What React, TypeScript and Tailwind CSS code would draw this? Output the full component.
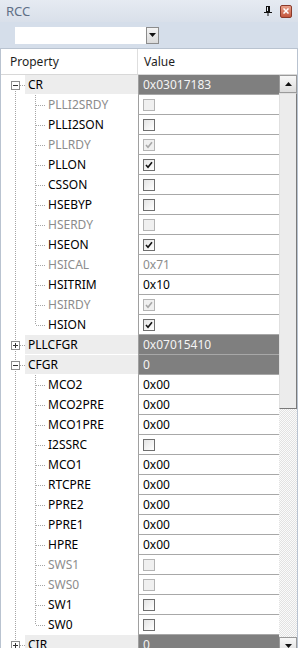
import React from "react";

type Child = {
  name: string;
  value?: string;
  check?: boolean;
  dis?: boolean;
};

type Reg = {
  name: string;
  value: string;
  open: boolean;
  children: Child[];
};

const REGS: Reg[] = [
  {
    name: "CR",
    value: "0x03017183",
    open: true,
    children: [
      { name: "PLLI2SRDY", check: false, dis: true },
      { name: "PLLI2SON", check: false },
      { name: "PLLRDY", check: true, dis: true },
      { name: "PLLON", check: true },
      { name: "CSSON", check: false },
      { name: "HSEBYP", check: false },
      { name: "HSERDY", check: false, dis: true },
      { name: "HSEON", check: true },
      { name: "HSICAL", value: "0x71", dis: true },
      { name: "HSITRIM", value: "0x10" },
      { name: "HSIRDY", check: true, dis: true },
      { name: "HSION", check: true },
    ],
  },
  { name: "PLLCFGR", value: "0x07015410", open: false, children: [] },
  {
    name: "CFGR",
    value: "0",
    open: true,
    children: [
      { name: "MCO2", value: "0x00" },
      { name: "MCO2PRE", value: "0x00" },
      { name: "MCO1PRE", value: "0x00" },
      { name: "I2SSRC", check: false },
      { name: "MCO1", value: "0x00" },
      { name: "RTCPRE", value: "0x00" },
      { name: "PPRE2", value: "0x00" },
      { name: "PPRE1", value: "0x00" },
      { name: "HPRE", value: "0x00" },
      { name: "SWS1", check: false, dis: true },
      { name: "SWS0", check: false, dis: true },
      { name: "SW1", check: false },
      { name: "SW0", check: false },
    ],
  },
  { name: "CIR", value: "0", open: false, children: [] },
];

const DOT = "#a6a6a6";

function CheckBox({ on, dis }: { on?: boolean; dis?: boolean }) {
  return (
    <div
      className={
        "w-[12px] h-[12px] border flex items-center justify-center " +
        (dis ? "border-[#b4b4b4] bg-[#f0f0f0]" : "border-[#6f6f6f] bg-gradient-to-br from-[#e4e4e4] to-white")
      }
    >
      {on && (
        <svg width="8" height="8" viewBox="0 0 8 8">
          <path
            d="M1 4 L3 6.2 L7 1.2"
            fill="none"
            stroke={dis ? "#a8a8a8" : "#111"}
            strokeWidth="1.6"
          />
        </svg>
      )}
    </div>
  );
}

function ParentRow({ r, first }: { r: Reg; first: boolean }) {
  return (
    <div className="flex h-[20px]">
      <div className="w-[138px] flex">
        <svg width="25" height="20" className="shrink-0">
          <line x1="15.5" y1={first ? 10 : 0} x2="15.5" y2="20" stroke={DOT} strokeDasharray="1 1" />
          <line x1="20" y1="10.5" x2="25" y2="10.5" stroke={DOT} strokeDasharray="1 1" />
          <rect x="11.5" y="6.5" width="8" height="8" fill="#fff" stroke="#8f8f8f" />
          <line x1="13" y1="10.5" x2="18" y2="10.5" stroke="#333" />
          {!r.open && <line x1="15.5" y1="8" x2="15.5" y2="13" stroke="#333" />}
        </svg>
        <div className="flex-1 bg-[#ededed] h-[19px] pl-[3px] flex items-center text-black">{r.name}</div>
      </div>
      <div className="flex-1 border-l border-[#a0a0a0] bg-[#7f7f7f] h-[20px] pl-[4px] flex items-center text-[#f4f4f4] border-b border-b-[#a8a8a8]">
        {r.value}
      </div>
    </div>
  );
}

function ChildRow({ c, last }: { c: Child; last: boolean }) {
  return (
    <div className="flex h-[20px]">
      <div className="w-[138px] flex items-center">
        <svg width="46" height="20" className="shrink-0">
          <line x1="15.5" y1="0" x2="15.5" y2="20" stroke={DOT} strokeDasharray="1 1" />
          <line x1="35.5" y1="0" x2="35.5" y2={last ? 10 : 20} stroke={DOT} strokeDasharray="1 1" />
          <line x1="36" y1="10.5" x2="46" y2="10.5" stroke={DOT} strokeDasharray="1 1" />
        </svg>
        <span className={"pl-[2px] " + (c.dis ? "text-[#8c8c8c]" : "text-black")}>{c.name}</span>
      </div>
      <div className="flex-1 border-l border-[#a0a0a0] border-b border-b-[#a8a8a8] pl-[4px] flex items-center bg-white">
        {c.value !== undefined ? (
          <span className={c.dis ? "text-[#8c8c8c]" : "text-black"}>{c.value}</span>
        ) : (
          <CheckBox on={c.check} dis={c.dis} />
        )}
      </div>
    </div>
  );
}

function ScrollButton({ up }: { up: boolean }) {
  return (
    <div className="h-[18px] shrink-0 border border-[#9a9a9a] bg-gradient-to-b from-[#f8f8f8] to-[#dcdcdc] flex items-center justify-center">
      <svg width="7" height="4" viewBox="0 0 7 4">
        <path d={up ? "M0 4 L3.5 0 L7 4 Z" : "M0 0 L3.5 4 L7 0 Z"} fill="#111" />
      </svg>
    </div>
  );
}

export default function App() {
  return (
    <div
      className="w-[298px] h-[648px] overflow-hidden flex flex-col bg-[#d6dfeb] text-[12px] leading-none"
      style={{ fontFamily: '"Noto Sans", "Open Sans", sans-serif' }}
    >
      {/* title bar */}
      <div className="h-[22px] shrink-0 flex items-center px-[6px] bg-gradient-to-b from-[#e6ebf2] to-[#d9e0ea]">
        <span className="text-[#5f6f86] text-[13px]">RCC</span>
        <div className="flex-1" />
        <svg width="8" height="10" viewBox="0 0 8 10" className="mr-[8px]">
          <rect x="2.5" y="0.5" width="3" height="5" fill="none" stroke="#111" />
          <line x1="4.5" y1="0.5" x2="4.5" y2="5.5" stroke="#111" />
          <line x1="0" y1="6.5" x2="8" y2="6.5" stroke="#111" />
          <line x1="4" y1="6.5" x2="4" y2="10" stroke="#111" />
        </svg>
        <div className="w-[12px] h-[13px] rounded-[2px] border border-[#8a3a2a] bg-gradient-to-b from-[#e8a08a] to-[#c4553c] flex items-center justify-center">
          <svg width="6" height="6" viewBox="0 0 6 6">
            <path d="M0.5 0.5 L5.5 5.5 M5.5 0.5 L0.5 5.5" stroke="#fff" strokeWidth="1.5" />
          </svg>
        </div>
      </div>

      {/* toolbar */}
      <div className="h-[26px] shrink-0 flex items-center pl-[15px] bg-[#d5deea]">
        <div className="w-[131px] h-[17px] bg-white" />
        <div className="w-[13px] h-[17px] border border-[#8c8c8c] bg-gradient-to-b from-[#f4f4f4] to-[#dadada] flex items-center justify-center">
          <svg width="7" height="4" viewBox="0 0 7 4">
            <path d="M0 0 L3.5 4 L7 0 Z" fill="#111" />
          </svg>
        </div>
      </div>

      {/* property grid */}
      <div className="flex-1 flex flex-col border-t border-[#b9c3d0] border-l border-[#9aa6b6] border-r mx-0 bg-white">
        <div className="h-[26px] shrink-0 flex border-b border-[#d8d8d8] text-[#1e1e1e]">
          <div className="w-[137px] pl-[9px] flex items-center border-r border-[#dedede]">Property</div>
          <div className="flex-1 pl-[6px] flex items-center">Value</div>
        </div>
        <div className="flex-1 flex min-h-0 border-b border-[#9aa6b6]">
          <div className="flex-1 overflow-hidden -ml-[1px]">
            {REGS.map((r, i) => (
              <React.Fragment key={r.name}>
                <ParentRow r={r} first={i === 0} />
                {r.open &&
                  r.children.map((c, j) => (
                    <ChildRow key={c.name} c={c} last={j === r.children.length - 1} />
                  ))}
              </React.Fragment>
            ))}
          </div>
          <div className="w-[18px] shrink-0 flex flex-col">
            <ScrollButton up />
            <div className="h-[316px] shrink-0 border border-[#7a7a7a] border-t-[#e0e0e0] border-l-[#e0e0e0] bg-[#ececec]" />
            <div className="flex-1 bg-[repeating-conic-gradient(#e2e2e2_0%_25%,#fbfbfb_0%_50%)] bg-[length:2px_2px]" />
            <ScrollButton up={false} />
          </div>
        </div>
      </div>
    </div>
  );
}
